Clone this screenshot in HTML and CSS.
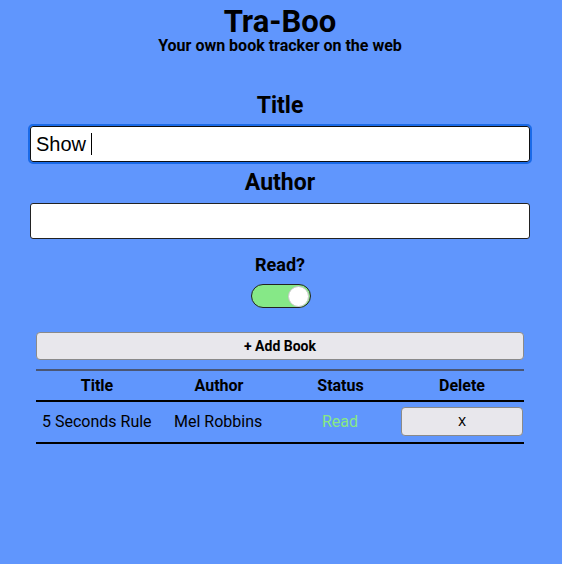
FILE: index.html
```html
<!DOCTYPE html>
<html>
<head>
<meta charset="utf-8">
<link rel="stylesheet" href="styles.css">
</head>
<body>
<div class="app">
  <header class="head">
    <h1 class="brand">Tra-Boo</h1>
    <p class="tagline">Your own book tracker on the web</p>
  </header>
  <form class="form">
    <label class="label">Title</label>
    <div class="input focused"><span class="val">Show</span><span class="caret"></span></div>
    <label class="label">Author</label>
    <div class="input"></div>
    <label class="label small">Read?</label>
    <div class="toggle"><span class="knob"></span></div>
    <button type="button" class="add">+ Add Book</button>
  </form>
  <table class="books">
    <colgroup>
      <col class="c1"><col class="c2"><col class="c3"><col class="c4">
    </colgroup>
    <thead>
      <tr><th class="t1">Title</th><th>Author</th><th class="t3">Status</th><th>Delete</th></tr>
    </thead>
    <tbody>
      <tr>
        <td>5 Seconds Rule</td>
        <td>Mel Robbins</td>
        <td class="status">Read</td>
        <td class="del"><button type="button" class="x">X</button></td>
      </tr>
    </tbody>
  </table>
</div>
</body>
</html>
```
FILE: styles.css
```css
html, body {
  margin: 0;
  padding: 0;
  background: #6096fd;
}
body {
  font-family: Roboto, "Liberation Sans", sans-serif;
  color: #000;
}
.app {
  width: 500px;
  margin: 0 0 0 30px;
  padding-top: 5px;
  display: flex;
  flex-direction: column;
  align-items: center;
}
.head {
  text-align: center;
}
.brand {
  margin: 0;
  font-size: 31px;
  font-weight: 700;
  line-height: 33px;
}
.tagline {
  margin: 0;
  font-size: 16px;
  font-weight: 700;
  line-height: 16px;
}
.form {
  width: 500px;
  display: flex;
  flex-direction: column;
  align-items: center;
  margin-top: 38px;
}
.label {
  font-size: 23px;
  font-weight: 700;
  line-height: 28px;
  margin-bottom: 6px;
}
.label.small {
  font-size: 18px;
  line-height: 22px;
  margin-top: 8px;
  margin-bottom: 8px;
}
.input {
  box-sizing: border-box;
  width: 500px;
  height: 36px;
  background: #fff;
  border: 1px solid #222;
  border-radius: 3px;
  display: flex;
  align-items: center;
  padding-left: 5px;
  font-family: "Liberation Sans", Arial, sans-serif;
  font-size: 20px;
  margin-bottom: 7px;
}
.input.focused {
  outline: 2px solid #1a6ae8;
  outline-offset: 0;
  border-color: #111;
}
.caret {
  display: inline-block;
  width: 1px;
  height: 22px;
  background: #000;
  margin-left: 5px;
}
.toggle {
  box-sizing: border-box;
  width: 60px;
  height: 24px;
  margin-left: 1px;
  border: 1px solid #222;
  border-radius: 12px;
  background: #86e887;
  display: flex;
  align-items: center;
  justify-content: flex-end;
  padding-right: 1px;
}
.knob {
  box-sizing: border-box;
  width: 21px;
  height: 21px;
  border-radius: 50%;
  background: #fff;
  border: 1px solid #c8c8c8;
}
.add {
  box-sizing: border-box;
  width: 488px;
  height: 28px;
  margin-top: 24px;
  background: #e8e7ec;
  border: 1px solid #8a8a8a;
  border-radius: 4px;
  font-family: Roboto, sans-serif;
  font-size: 14px;
  font-weight: 700;
  color: #000;
}
.books {
  width: 488px;
  margin-top: 9px;
  border-collapse: separate;
  border-spacing: 0;
  table-layout: fixed;
  border-top: 2px solid #4a5674;
  border-bottom: 2px solid #000;
  font-size: 16px;
}
.c1 { width: 132px; }
.c2 { width: 102px; }
.c3 { width: 130px; }
.c4 { width: 124px; }
.books th {
  font-weight: 700;
  line-height: 29px;
  padding: 0;
  border-bottom: 2px solid #000;
  text-align: center;
}
.books th.t1 {
  padding-right: 10px;
}
.books th.t3 {
  padding-left: 11px;
}
.books td {
  line-height: 29px;
  padding: 5px 6px 6px;
  vertical-align: middle;
  white-space: nowrap;
}
.books td.status {
  color: #88e884;
  text-align: center;
  padding-left: 16px;
}
.books td.del {
  padding-left: 1px;
  padding-right: 1px;
}
.x {
  display: block;
  box-sizing: border-box;
  width: 122px;
  height: 29px;
  background: #e8e7ec;
  border: 1px solid #8a8a8a;
  border-radius: 4px;
  font-family: Roboto, sans-serif;
  font-size: 13px;
  color: #000;
}
```
